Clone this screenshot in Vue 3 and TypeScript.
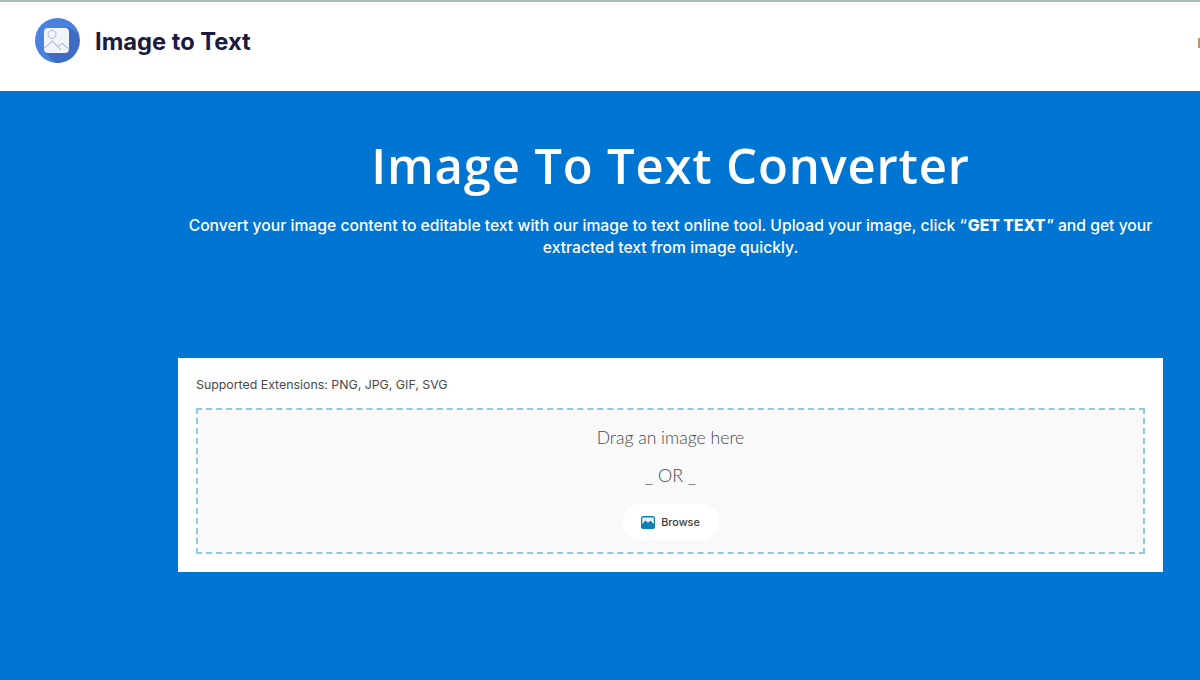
<script setup lang="ts">
const title: string = 'Image To Text Converter'
</script>

<template>
  <div class="page">
    <header class="topbar">
      <svg class="logo" width="46" height="46" viewBox="0 0 46 46" aria-hidden="true">
        <circle cx="22.5" cy="22.5" r="22.5" fill="#4a80de" />
        <path d="M33 9 L43 15 A22.5 22.5 0 0 1 20 44.8 L10 34 Z" fill="#3e6cc4" />
        <rect x="9" y="10" width="25" height="25" rx="4" fill="#f1f4fb" />
        <circle cx="17" cy="16.5" r="4" fill="#f1f4fb" stroke="#b7c2e2" stroke-width="1.1" />
        <path d="M9.5 30 L17.5 23 L26 32 M23 28.5 L27 25.5 L34 31" fill="none" stroke="#b7c2e2" stroke-width="1.1" />
      </svg>
      <span class="brand">Image to Text</span>
      <span class="edge"></span>
    </header>
    <main class="hero">
      <h1 class="title">{{ title }}</h1>
      <p class="lead">
        Convert your image content to editable text with our image to text online tool. Upload your image, click
        <span class="nowrap">“<b>GET TEXT</b>”</span> and get your extracted text from image quickly.
      </p>
      <section class="card">
        <div class="ext">Supported Extensions: PNG, JPG, GIF, SVG</div>
        <div class="drop">
          <div class="drag">Drag an image here</div>
          <div class="or">_ OR _</div>
          <button class="browse" type="button">
            <svg width="14" height="13" viewBox="0 0 14 13" aria-hidden="true">
              <rect width="14" height="13" rx="2" fill="#0f7fb5" />
              <rect x="1.2" y="1.5" width="11.6" height="6.5" fill="#e4f1f7" />
              <path d="M1.2 8 L4.5 4.5 L7 6.8 L9.5 4.8 L12.8 8 L12.8 11.5 L1.2 11.5 Z" fill="#0f7fb5" />
            </svg>
            <span>Browse</span>
          </button>
        </div>
      </section>
    </main>
  </div>
</template>

<style>
html, body { margin: 0; padding: 0; background: #0075d1; }
</style>

<style scoped>
.page {
  width: 1200px;
  height: 680px;
  overflow: hidden;
  background: #0075d1;
  display: flex;
  flex-direction: column;
  font-family: "Lato", "Open Sans", sans-serif;
}
.topbar {
  box-sizing: border-box;
  height: 91px;
  flex: none;
  background: #fff;
  border-top: 2px solid #a9bcb6;
  display: flex;
  align-items: center;
  padding: 0 0 11px 35px;
  position: relative;
}
.logo { flex: none; }
.brand {
  margin-left: 14px;
  font-size: 23.7px;
  font-weight: 700;
  color: #1b1b3f;
  font-family: "Inter", sans-serif;
}
.edge {
  position: absolute;
  right: 0;
  top: 36px;
  width: 2px;
  height: 10px;
  background: #b89a62;
}
.hero {
  flex: 1;
  display: flex;
  flex-direction: column;
  padding-left: 178px;
  padding-right: 37px;
}
.title {
  margin: 43px 0 0;
  color: #fff;
  font-family: "Open Sans", sans-serif;
  font-size: 49px;
  line-height: 62px;
  font-weight: 600;
  text-align: center;
  letter-spacing: 0.8px;
}
.lead {
  margin: 19px 0 0;
  color: #fff;
  font-family: "Inter", sans-serif;
  font-size: 15.7px;
  font-weight: 500;
  line-height: 22px;
  text-align: center;
}
.lead b { font-weight: 800; padding: 0 1px; }
.nowrap { white-space: nowrap; }
.card {
  box-sizing: border-box;
  margin-top: 99px;
  height: 214px;
  background: #fff;
  padding: 18px;
  display: flex;
  flex-direction: column;
}
.ext {
  font-family: "Inter", sans-serif;
  font-size: 12.35px;
  line-height: 18px;
  color: #484848;
}
.drop {
  box-sizing: border-box;
  margin-top: 14px;
  height: 146px;
  background: #f9f9f9;
  border: 2px dashed #8ecbe0;
  display: flex;
  flex-direction: column;
  align-items: center;
  padding-top: 18px;
  color: #4a4a4a;
}
.drag { font-size: 17.6px; line-height: 20px; font-weight: 300; }
.or { margin-top: 17px; font-size: 18px; line-height: 20px; font-weight: 300; }
.browse {
  margin-top: 19px;
  width: 96px;
  height: 36px;
  border: none;
  border-radius: 18px;
  background: #fff;
  display: flex;
  align-items: center;
  justify-content: center;
  gap: 6px;
  font-family: "Inter", sans-serif;
  font-size: 10.8px;
  font-weight: 500;
  color: #3a3a3a;
  padding: 0;
}
</style>
